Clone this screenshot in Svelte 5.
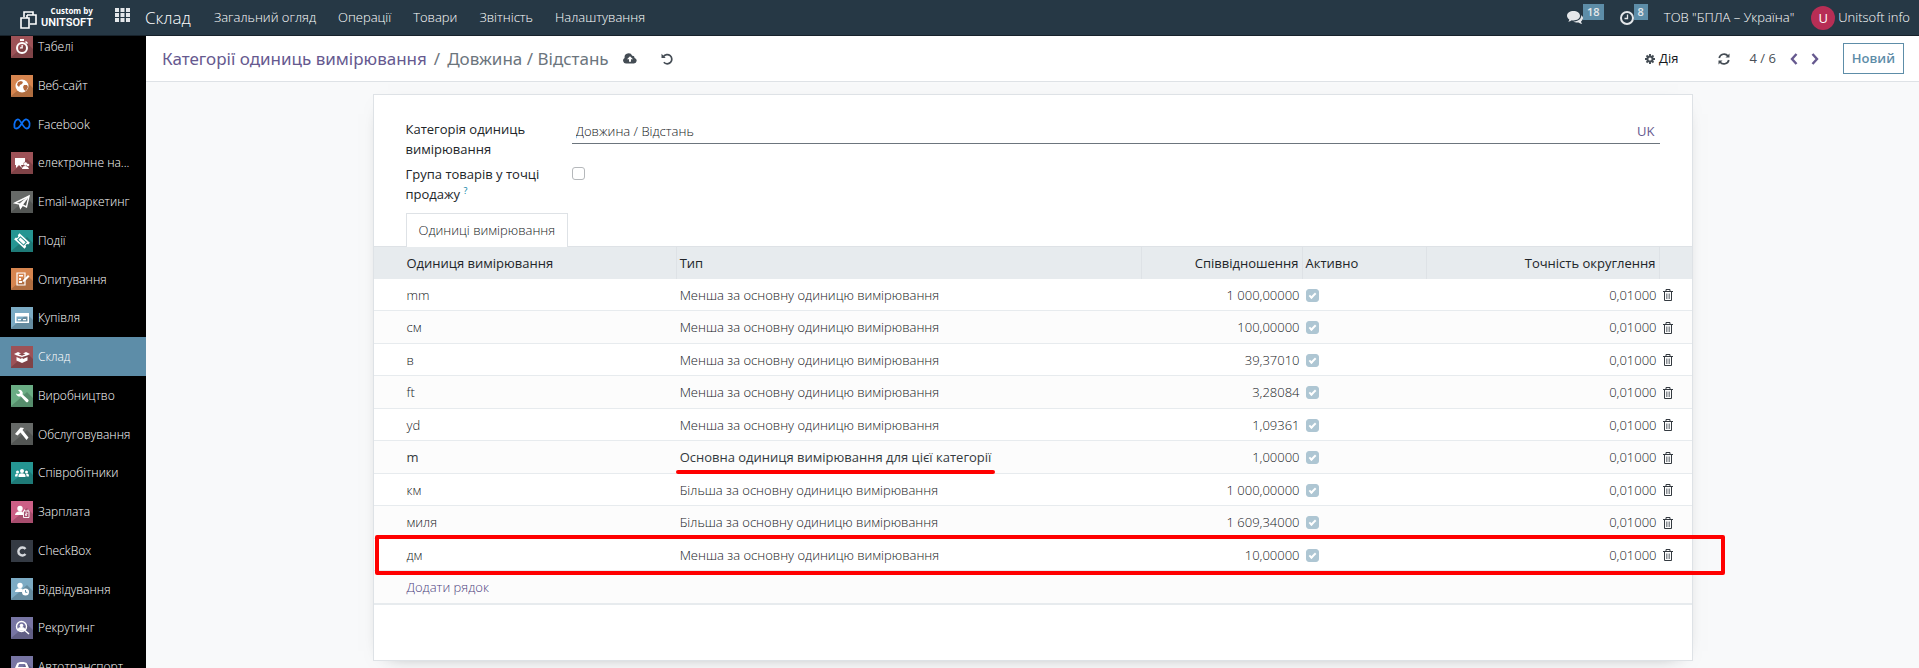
<script>
  const apps = [
    { name: 'Табелі', icon: 'timer', tone: 'red' },
    { name: 'Веб-сайт', icon: 'globe', tone: 'orange' },
    { name: 'Facebook', icon: 'meta', tone: 'none' },
    { name: 'електронне на...', icon: 'elearning', tone: 'red' },
    { name: 'Email-маркетинг', icon: 'plane', tone: 'gray' },
    { name: 'Події', icon: 'ticket', tone: 'teal' },
    { name: 'Опитування', icon: 'survey', tone: 'orange' },
    { name: 'Купівля', icon: 'card', tone: 'blue' },
    { name: 'Склад', icon: 'box', tone: 'red', active: true },
    { name: 'Виробництво', icon: 'wrench', tone: 'green' },
    { name: 'Обслуговування', icon: 'hammer', tone: 'gray' },
    { name: 'Співробітники', icon: 'people', tone: 'teal' },
    { name: 'Зарплата', icon: 'payroll', tone: 'pink' },
    { name: 'CheckBox', icon: 'checkbox', tone: 'dark' },
    { name: 'Відвідування', icon: 'attendance', tone: 'blue' },
    { name: 'Рекрутинг', icon: 'recruit', tone: 'violet' },
    { name: 'Автотранспорт', icon: 'car', tone: 'violet' }
  ];

  const menus = ['Загальний огляд', 'Операції', 'Товари', 'Звітність', 'Налаштування'];

  const smaller = 'Менша за основну одиницю вимірювання';
  const bigger = 'Більша за основну одиницю вимірювання';
  const reference = 'Основна одиниця вимірювання для цієї категорії';

  let units = $state([
    { name: 'mm', type: smaller, ratio: '1 000,00000', active: true, rounding: '0,01000' },
    { name: 'см', type: smaller, ratio: '100,00000', active: true, rounding: '0,01000' },
    { name: 'в', type: smaller, ratio: '39,37010', active: true, rounding: '0,01000' },
    { name: 'ft', type: smaller, ratio: '3,28084', active: true, rounding: '0,01000' },
    { name: 'yd', type: smaller, ratio: '1,09361', active: true, rounding: '0,01000' },
    { name: 'm', type: reference, ratio: '1,00000', active: true, rounding: '0,01000' },
    { name: 'км', type: bigger, ratio: '1 000,00000', active: true, rounding: '0,01000' },
    { name: 'миля', type: bigger, ratio: '1 609,34000', active: true, rounding: '0,01000' },
    { name: 'дм', type: smaller, ratio: '10,00000', active: true, rounding: '0,01000', marked: true }
  ]);

  let category = $state('Довжина / Відстань');
  let grouped = $state(false);
</script>

{#snippet appIcon(icon)}
  <svg viewBox="0 0 22 22" fill="#fff" aria-hidden="true">
    {#if icon !== 'meta' && icon !== 'checkbox'}
      <path d="M6 16 L16 7 L22 13 V22 H0 V21 Z" fill="#000" opacity="0.18" />
    {/if}
    {#if icon === 'timer'}
      <circle cx="11" cy="12" r="5" fill="none" stroke="#fff" stroke-width="2" />
      <path d="M9 3h4v2H9zM15 5l2 2-1 1-2-2zM10.500 9h1.300v3.500H9v-1.200h1.500z" />
    {:else if icon === 'globe'}
      <circle cx="11" cy="11" r="6.500" />
      <path d="M7 7l3-1 2 1-1 2-2 1-1 2-2-2zM13 10l3 0 1 2-2 4-2-1-1-3z" fill="#b5683c" />
    {:else if icon === 'meta'}
      <path
        d="M3.500 14.500C2.500 10 5 5.500 7.500 6.500C10 7.500 12.500 15.500 15.500 15.500C18.500 15.500 19.500 11 18 8.500C16 5 13.500 6 11 10C9 13.500 7.500 15.500 5.500 15.500C4.500 15.500 3.800 15.200 3.500 14.500Z"
        fill="none"
        stroke="#0a6ff5"
        stroke-width="1.800"
      />
    {:else if icon === 'elearning'}
      <path d="M4 6h10v7h-4l1 3-3-3-3 3v-3H4z" />
      <circle cx="14.500" cy="12" r="2" stroke="#8b474b" stroke-width="0.500" />
      <path d="M11 17c0-4 6-4 7 0z" />
      <circle cx="17" cy="13" r="1.300" />
    {:else if icon === 'plane'}
      <path d="M4 12L18 5l-2.500 11-4-2-2 3-1-4z" fill="none" stroke="#fff" stroke-width="1.400" />
      <path d="M18 5L8.500 13l1 4 2-3z" stroke="#fff" stroke-width="0.800" />
    {:else if icon === 'ticket'}
      <g transform="rotate(42 11 11)">
        <path d="M4 7h14v2.500a1.500 1.500 0 0 0 0 3V15H4v-2.500a1.500 1.500 0 0 0 0-3z" />
        <path d="M7 9h8v4H7z" fill="none" stroke="#1d8885" stroke-width="1" />
      </g>
    {:else if icon === 'survey'}
      <path d="M6 5h8v12H6z" fill="none" stroke="#fff" stroke-width="1.200" />
      <path d="M8 7h4v1.500H8zM8 10h2v2H8zM8 13h3v2H8zM12 12l5-5 1.500 1.500-5 5-2 .5z" />
    {:else if icon === 'card'}
      <path d="M4 6h14v10H4zM5.500 9.500v5h11v-5z" fill-rule="evenodd" />
      <path d="M7 12h3v1.300H7zM12 12h3v1.300h-3z" />
    {:else if icon === 'box'}
      <path d="M11 8l4-2 4 2-3 1.500L11 11 6 9.500 3 8l4-2z" />
      <path d="M5.500 11l4.500 2 1-1.500 1 1.500 4.500-2v3.500L11 17l-5.500-2.500z" />
      <path d="M7.500 8.200L11 7l3.500 1.200L11 9.700z" fill="#8b474b" />
    {:else if icon === 'wrench'}
      <path d="M5 8.500a3.500 3.500 0 0 0 4.700 2.800l5.200 5.400a1.500 1.500 0 0 0 2.200-2.200L11.600 9.400A3.500 3.500 0 0 0 7 5l2 2.200-.5 1.600-1.600.4z" />
    {:else if icon === 'hammer'}
      <path d="M4 11l5.500-6.500 3.500.5-1.500 2L17.500 14.500 15.500 17 9.500 9.500l-3 3z" />
    {:else if icon === 'people'}
      <circle cx="11" cy="9" r="2" />
      <circle cx="6.500" cy="10" r="1.500" />
      <circle cx="15.500" cy="10" r="1.500" />
      <path d="M7.500 15v-1.500c0-3 7-3 7 0V15zM4 14.500c0-3 1.500-2.800 3-2.500-.5 1-.5 2-.5 2.500zM18 14.500c0-3-1.500-2.800-3-2.500.5 1 .5 2 .5 2.500z" />
    {:else if icon === 'payroll'}
      <circle cx="9" cy="7.500" r="2.700" />
      <path d="M4 14c0-4 8-5 8-2v2z" />
      <path d="M12.500 10h5.500v6.500h-5.500zM13.500 8.500v1.500M17 8.500v1.500M14.500 12h1.500v1.200h-1.500v1.200h1.500" fill="none" stroke="#fff" stroke-width="0.900" />
    {:else if icon === 'checkbox'}
      <path d="M14.500 9a4 4 0 1 0 0 5" fill="none" stroke="#d5d8dc" stroke-width="2.400" />
    {:else if icon === 'attendance'}
      <circle cx="9" cy="7.500" r="2.700" />
      <path d="M4 14c0-4 7-5 8-2l-1 2z" />
      <circle cx="14.500" cy="14" r="3.500" />
      <path d="M14.500 12v2.300h1.800" fill="none" stroke="#6798b0" stroke-width="1" />
    {:else if icon === 'recruit'}
      <circle cx="10.500" cy="9.500" r="5" fill="none" stroke="#fff" stroke-width="1.400" />
      <circle cx="10.500" cy="8.500" r="1.800" />
      <path d="M7.500 13c0-3 6-3 6 0zM14 13.500l4 3.500" stroke="#fff" stroke-width="1.500" />
    {:else if icon === 'car'}
      <path d="M4 12l2-4.500c1-2 9-2 10 0l2 4.500v5H4zM7 11h8l-1-3H8z" fill-rule="evenodd" />
    {/if}
  </svg>
{/snippet}

<div class="web-client">
  <header class="navbar">
    <a href="#home" class="brand">
      <svg width="17" height="18" viewBox="0 0 17 18" fill="none" stroke="#fff" stroke-width="1.600" aria-hidden="true">
        <path d="M4 6V1h9v3M7 4h9v9h-6M7 4v3" />
        <path d="M1 7h8v10H1z" />
      </svg>
      <span class="brand-text">
        <small>Custom by</small>
        <b>UNITSOFT</b>
      </span>
    </a>
    <button class="apps-toggle" aria-label="Застосунки">
      <svg width="15" height="14" viewBox="0 0 15 14" fill="#e4e7ea">
        <path d="M0 0h4v4H0zM5.500 0h4v4h-4zM11 0h4v4h-4zM0 5h4v4H0zM5.500 5h4v4h-4zM11 5h4v4h-4zM0 10h4v4H0zM5.500 10h4v4h-4zM11 10h4v4h-4z" />
      </svg>
    </button>
    <a href="#stock" class="app-name">Склад</a>
    <nav class="menus">
      {#each menus as menu}
        <a href="#menu">{menu}</a>
      {/each}
    </nav>
    <div class="systray">
      <button class="tray-button">
        <svg width="16" height="14" viewBox="0 0 16 14" fill="#e4e7ea" aria-hidden="true">
          <path d="M6.500 0C10 0 13 2 13 4.800S10 9.500 6.500 9.500c-.6 0-1.200 0-1.700-.2C3.800 10.200 2.500 10.700 1.200 10.800c.6-.7 1-1.400 1.100-2.300C.9 7.600 0 6.300 0 4.800 0 2 3 0 6.500 0z" />
          <path d="M14.200 4.200c1.100.7 1.800 1.700 1.800 2.900 0 1.300-.8 2.500-2 3.300.1.900.6 1.700 1.200 2.500-1.300-.1-2.600-.7-3.600-1.500-2 .3-4-.1-5.300-.9 4.500 0 8.300-2.500 7.900-6.300z" />
        </svg>
        <span class="badge">18</span>
      </button>
      <button class="tray-button">
        <svg width="14" height="14" viewBox="0 0 14 14" fill="none" stroke="#e4e7ea" stroke-width="2" aria-hidden="true">
          <circle cx="7" cy="7" r="6" />
          <path d="M7.500 3.500v4H4.500" stroke-width="1.300" />
        </svg>
        <span class="badge">8</span>
      </button>
      <a href="#company" class="company">ТОВ "БПЛА – Україна"</a>
      <a href="#user" class="user"><span class="avatar">U</span>Unitsoft info</a>
    </div>
  </header>

  <div class="body">
    <aside class="sidebar">
      <ul>
        {#each apps as app}
          <li>
            <a href="#app" class:active={app.active}>
              <span class="app-icon {app.tone}">{@render appIcon(app.icon)}</span>
              <span class="app-label"><small>{app.name}</small></span>
            </a>
          </li>
        {/each}
      </ul>
    </aside>

    <main>
      <div class="control-panel">
        <nav class="breadcrumb">
          <a href="#categories">Категорії одиниць вимірювання</a>
          <span>/</span>
          <span>Довжина / Відстань</span>
        </nav>
        <button class="icon-button save" aria-label="Зберегти">
          <svg width="14" height="11" viewBox="0 0 14 11" fill="#444c54">
            <path
              d="M3 10.500A3 3 0 0 1 1.600 4.900 4 4 0 0 1 9.200 2.700 2.300 2.300 0 0 1 11.600 5a2.800 2.800 0 0 1-.8 5.500zM7 3.200L4 6.200h2v2.600h2V6.200h2z"
              fill-rule="evenodd"
            />
          </svg>
        </button>
        <button class="icon-button undo" aria-label="Скасувати">
          <svg width="12" height="12" viewBox="0 0 12 12" fill="none" stroke="#444c54" stroke-width="1.700">
            <path d="M2.500 3.500A4.600 4.600 0 1 1 2.800 9.300" />
            <path d="M.5.800v4.200h4.200z" fill="#444c54" stroke="none" />
          </svg>
        </button>

        <button class="action">
          <svg width="10" height="10" viewBox="0 0 10 10" fill="none" stroke="#444c54" aria-hidden="true">
            <circle cx="5" cy="5" r="2.600" stroke-width="2" />
            <path d="M5 0v2M5 8v2M0 5h2M8 5h2M1.500 1.500l1.400 1.400M7.100 7.100l1.400 1.400M8.500 1.500L7.100 2.900M2.900 7.100L1.500 8.500" stroke-width="1.900" />
          </svg>
          Дія
        </button>
        <button class="icon-button refresh" aria-label="Оновити">
          <svg width="12" height="12" viewBox="0 0 12 12" fill="none" stroke="#444c54" stroke-width="1.700">
            <path d="M1.200 5A5 5 0 0 1 10 3M10.800 7A5 5 0 0 1 2 9" />
            <path d="M11.500.500v4h-4zM.5 11.500v-4h4z" fill="#444c54" stroke="none" />
          </svg>
        </button>
        <span class="pager">4 / 6</span>
        <button class="icon-button prev" aria-label="Попередній">
          <svg width="8" height="12" viewBox="0 0 8 12" fill="none" stroke="#66598f" stroke-width="2.400">
            <path d="M6.500 1L2 6l4.500 5" />
          </svg>
        </button>
        <button class="icon-button next" aria-label="Наступний">
          <svg width="8" height="12" viewBox="0 0 8 12" fill="none" stroke="#66598f" stroke-width="2.400">
            <path d="M1.500 1L6 6l-4.500 5" />
          </svg>
        </button>
        <button class="create">Новий</button>
      </div>

      <div class="form-view">
        <form class="sheet">
          <div class="fields">
            <label for="category">Категорія одиниць вимірювання</label>
            <div class="input-line">
              <input id="category" type="text" bind:value={category} />
              <button type="button" class="lang">UK</button>
            </div>
            <label for="grouped">Група товарів у точці продажу <sup>?</sup></label>
            <input id="grouped" type="checkbox" bind:checked={grouped} />
          </div>

          <div class="tabs">
            <button type="button" class="tab">Одиниці вимірювання</button>
          </div>

          <table>
            <colgroup>
              <col class="col-name" />
              <col class="col-type" />
              <col class="col-ratio" />
              <col class="col-active" />
              <col class="col-rounding" />
              <col class="col-trash" />
            </colgroup>
            <thead>
              <tr>
                <th>Одиниця вимірювання</th>
                <th>Тип</th>
                <th class="number">Співвідношення</th>
                <th>Активно</th>
                <th class="number">Точність округлення</th>
                <th></th>
              </tr>
            </thead>
            <tbody>
              {#each units as unit}
                <tr class:reference={unit.type === reference}>
                  <td>
                    {unit.name}
                    {#if unit.marked}
                      <span class="frame"></span>
                    {/if}
                  </td>
                  <td><span class="type">{unit.type}</span></td>
                  <td class="number">{unit.ratio}</td>
                  <td><input type="checkbox" aria-label="Активно" bind:checked={unit.active} /></td>
                  <td class="number">{unit.rounding}</td>
                  <td>
                    <button type="button" class="trash" aria-label="Видалити">
                      <svg width="10" height="12" viewBox="0 0 10 12" fill="none" stroke="#343a40">
                        <path d="M0 2.500h10M3 2.500v-2h4v2M1.500 3v8.500h7V3" />
                        <path d="M3.500 4.500v5.500M5 4.500v5.500M6.500 4.500v5.500" stroke="#8a8f94" />
                      </svg>
                    </button>
                  </td>
                </tr>
              {/each}
              <tr>
                <td colspan="6"><a href="#add">Додати рядок</a></td>
              </tr>
            </tbody>
          </table>
        </form>
      </div>
    </main>
  </div>
</div>

<style>
  :global(body) {
    margin: 0;
    font-family: 'Open Sans', 'Noto Sans', sans-serif;
    font-size: 13px;
    font-weight: 300;
    line-height: 1.5;
    color: #16191d;
    background: #f8f9fa;
  }

  a {
    color: #4d3f7d;
    text-decoration: none;
  }

  button {
    padding: 0;
    border: 0;
    background: none;
    font: inherit;
    color: inherit;
    cursor: pointer;
  }

  svg {
    display: block;
  }

  .web-client {
    height: 100vh;
    display: flex;
    flex-direction: column;
    overflow: hidden;
  }

  /* top bar */
  .navbar {
    flex: none;
    display: flex;
    align-items: center;
    box-sizing: border-box;
    height: 36px;
    padding: 0 9px 0 20px;
    background: #263845;
    border-bottom: 1px solid #17222b;
  }

  .navbar a {
    color: #fff;
    white-space: nowrap;
  }

  .brand {
    display: flex;
    align-items: flex-end;
    gap: 4px;
    width: 95px;
  }

  .brand-text {
    display: flex;
    flex-direction: column;
    align-items: flex-end;
    color: #fff;
  }

  .brand small {
    font-size: 8px;
    font-weight: 700;
    line-height: 10px;
  }

  .brand b {
    font-family: Roboto, sans-serif;
    font-size: 11px;
    font-weight: 600;
    line-height: 13px;
  }

  .apps-toggle {
    margin: 0 15px 6px 0;
  }

  .app-name {
    margin-right: 23px;
    font-size: 17px;
  }

  .menus {
    display: flex;
    gap: 22px;
  }

  .systray {
    display: flex;
    align-items: center;
    margin-left: auto;
  }

  .tray-button {
    display: flex;
    align-items: center;
    margin-right: 16px;
  }

  .badge {
    margin-bottom: 12px;
    padding: 0 4px;
    background: #5d8da8;
    color: #e4e7ea;
    font-size: 11px;
    font-weight: 600;
    line-height: 16px;
  }

  .company {
    margin-right: 17px;
  }

  .user {
    display: flex;
    align-items: center;
    gap: 3px;
  }

  .avatar {
    width: 24px;
    height: 24px;
    border-radius: 50%;
    background: #b72e55;
    font-weight: 400;
    text-align: center;
    line-height: 24px;
  }

  .body {
    flex: 1;
    display: flex;
    min-height: 0;
  }

  /* app list, scrolled down a little */
  .sidebar {
    flex: none;
    width: 146px;
    overflow: hidden;
    background: #000;
  }

  .sidebar ul {
    margin: -9px 0 0;
    padding: 0;
    list-style: none;
  }

  .sidebar a {
    display: flex;
    align-items: flex-end;
    gap: 5px;
    padding: 8px 0 8px 11px;
    line-height: 1.75;
    color: #fff;
  }

  .sidebar a.active {
    background: #5d8da8;
  }

  .app-icon {
    flex: none;
    width: 22px;
    height: 22px;
  }

  .app-label {
    white-space: nowrap;
  }

  .app-label small {
    font-size: 12px;
    line-height: 1;
  }

  .red {
    background: #9d5257;
  }

  .orange {
    background: #d6854f;
  }

  .gray {
    background: #666967;
  }

  .teal {
    background: #259592;
  }

  .blue {
    background: #7cabc4;
  }

  .green {
    background: #6aad84;
  }

  .pink {
    background: #cc5f86;
  }

  .dark {
    background: #343a43;
  }

  .violet {
    background: #7775a3;
  }

  main {
    flex: 1;
    min-width: 0;
    display: flex;
    flex-direction: column;
  }

  .control-panel {
    flex: none;
    display: flex;
    align-items: center;
    height: 45px;
    padding: 0 15px 0 16px;
    background: #fff;
    border-bottom: 1px solid #dee2e6;
  }

  .breadcrumb {
    display: flex;
    gap: 7px;
    margin-right: 14px;
    font-family: 'Noto Sans', 'Open Sans', sans-serif;
    font-size: 17px;
    font-weight: 400;
    white-space: nowrap;
    color: #6c757d;
  }

  .breadcrumb a {
    color: #66598f;
  }

  .undo {
    margin-left: 24px;
  }

  .action {
    display: flex;
    align-items: center;
    gap: 4px;
    margin-left: auto;
    font-weight: 400;
  }

  .refresh {
    margin-left: 40px;
  }

  .pager {
    margin-left: 19px;
    color: #495057;
    font-weight: 400;
  }

  .prev {
    margin-left: 14px;
  }

  .next {
    margin-left: 13px;
  }

  .create {
    box-sizing: border-box;
    height: 31px;
    margin-left: 24px;
    padding: 0 8px;
    border: 1px solid #5d8da8;
    font-weight: 600;
    color: #5d8da8;
  }

  /* form */
  .form-view {
    flex: 1;
    padding: 12px 16px 8px;
  }

  .sheet {
    box-sizing: border-box;
    max-width: 1320px;
    margin: 0 auto;
    padding: 25px 0 55px;
    background: #fff;
    border: 1px solid #dee2e6;
    box-shadow: 0 5px 20px -15px rgba(0, 0, 0, 0.6);
  }

  .fields {
    display: grid;
    grid-template-columns: 150px 1fr;
    column-gap: 16px;
    row-gap: 6px;
    margin: 0 32px;
    align-items: start;
  }

  label {
    font-weight: 500;
    color: #212529;
  }

  sup {
    font-size: 9px;
    line-height: 1;
    color: #0180a5;
  }

  .input-line {
    display: flex;
    align-items: center;
    border-bottom: 1px solid #6c757d;
  }

  .input-line input {
    flex: 1;
    padding: 2px 4px 1px;
    border: 0;
    outline: 0;
    background: none;
    font: inherit;
    color: inherit;
  }

  .lang {
    margin-right: 5px;
    font-weight: 500;
    color: #66598f;
  }

  input[type='checkbox'] {
    appearance: none;
    display: block;
    box-sizing: border-box;
    width: 13px;
    height: 13px;
    margin: 0;
    border: 1px solid #b5b8bb;
    border-radius: 3px;
    background: #fff;
  }

  .fields input[type='checkbox'] {
    margin-top: 2px;
  }

  td input[type='checkbox']:checked {
    border-color: #aec6d3;
    background: #aec6d3;
  }

  td input[type='checkbox']:checked::after {
    content: '';
    display: block;
    width: 5px;
    height: 2px;
    margin: 3px 0 0 2px;
    border: solid #fff;
    border-width: 0 0 2px 2px;
    transform: rotate(-45deg);
  }

  .tabs {
    display: flex;
    margin: 9px 32px 0;
  }

  .tab {
    height: 34px;
    margin-bottom: -1px;
    padding: 0 12px;
    border: 1px solid #dee2e6;
    border-bottom: 0;
    background: #fff;
    z-index: 1;
  }

  table {
    width: 100%;
    table-layout: fixed;
    border-collapse: separate;
    border-spacing: 0;
    border-top: 1px solid #dee2e6;
    border-bottom: 1px solid #e7ebee;
  }

  .col-name {
    width: 23%;
  }

  .col-ratio {
    width: 161px;
  }

  .col-active {
    width: 124px;
  }

  .col-rounding {
    width: 233px;
  }

  .col-trash {
    width: 32px;
  }

  th,
  td {
    padding: 7px 3px 5px;
    text-align: left;
    white-space: nowrap;
  }

  th {
    border-right: 1px solid #dee2e6;
    background: #e7ebee;
    font-weight: 500;
    color: #212529;
  }

  th:last-child {
    border-right: 0;
  }

  td {
    position: relative;
    border-bottom: 1px solid #e7ebee;
  }

  th:first-child,
  td:first-child {
    padding-left: 33px;
  }

  tbody tr:nth-child(even) {
    background: #fcfcfc;
  }

  .number {
    text-align: right;
  }

  .reference td:nth-child(-n + 2) {
    font-weight: 500;
    color: #343a40;
  }

  .type {
    position: relative;
  }

  /* hand-drawn red marks over the list */
  .reference .type::after {
    content: '';
    position: absolute;
    left: -4px;
    right: -4px;
    bottom: -8px;
    height: 4px;
    border-radius: 2px;
    background: #f00;
  }

  tr:has(.frame) {
    position: relative;
  }

  tr:has(.frame) td {
    position: static;
  }

  .frame {
    position: absolute;
    inset: -4px -33px -4px 1px;
    border: 4px solid #f00;
    border-radius: 2px;
    pointer-events: none;
  }

  .trash {
    display: block;
  }
</style>
